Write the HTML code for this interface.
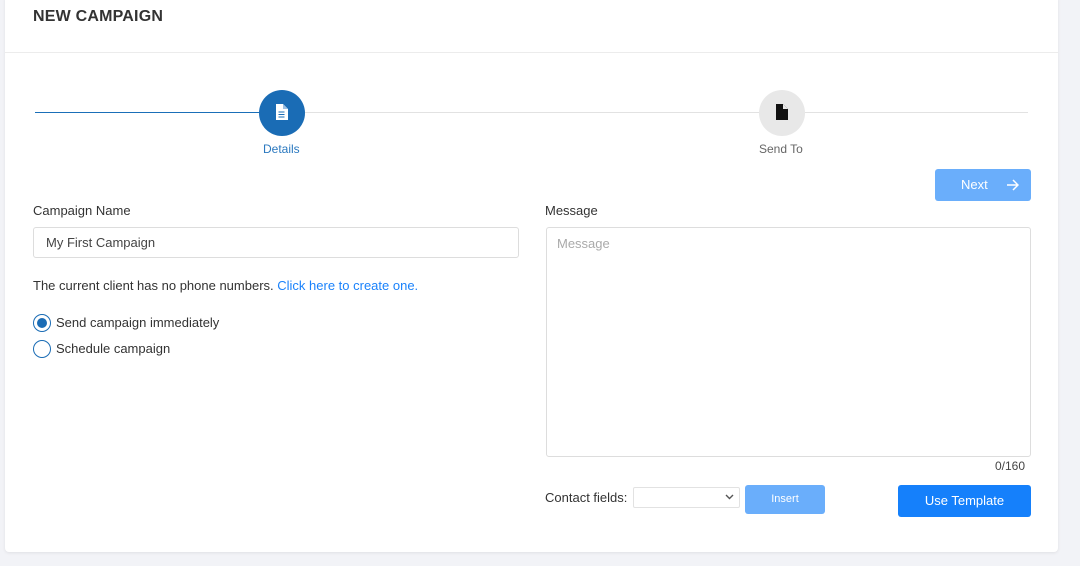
<!DOCTYPE html>
<html><head><style>
*{box-sizing:border-box;margin:0;padding:0}
body{width:1080px;height:566px;background:#f2f3f7;font-family:"Liberation Sans",sans-serif;position:relative;overflow:hidden;color:#333}
.card{position:absolute;left:5px;top:-4px;width:1053px;height:556px;background:#fff;border-radius:4px;box-shadow:0 1px 3px rgba(0,0,0,.08)}
.a{position:absolute}
h1{position:absolute;left:28px;top:12px;font-size:16px;font-weight:bold;color:#333;letter-spacing:.2px}
.hr{position:absolute;left:0;right:0;top:56px;height:1px;background:#ececec}
.circ{position:absolute;width:46px;height:46px;border-radius:50%}
input,.ta{border:1px solid #ddd;border-radius:3px;font-size:13px}
</style></head><body>
<div class="card">
<h1>NEW CAMPAIGN</h1>
<div class="hr"></div>
<div class="a" style="left:30px;top:116px;width:248px;height:1px;background:#1a6fb8"></div>
<div class="a" style="left:278px;top:116px;width:745px;height:1px;background:#e2e2e2"></div>
<div class="circ" style="left:254px;top:94px;background:#1a6cb5"></div>
<svg class="a" style="left:270px;top:108px" width="13" height="16" viewBox="0 0 13 16"><path d="M1 0h7l5 5v11H1z" fill="#fff"/><path d="M8 0v5h5" fill="#9bbfe2"/><path d="M3.5 8h6M3.5 10.5h6M3.5 13h6" stroke="#1a6cb5" stroke-width="1"/></svg>
<div class="circ" style="left:754px;top:94px;background:#e8e8e8"></div>
<svg class="a" style="left:770px;top:108px" width="13" height="16" viewBox="0 0 13 16"><path d="M1 0h7l5 5v11H1z" fill="#111"/><path d="M8 0v5h5z" fill="#e8e8e8"/></svg>
<div class="a" style="left:258px;top:146px;font-size:12px;color:#2a78bf">Details</div>
<div class="a" style="left:754px;top:146px;font-size:12px;color:#666">Send To</div>
<div class="a" style="left:930px;top:173px;width:96px;height:32px;background:#6aaefb;border-radius:3px;color:#fff;font-size:13px;line-height:32px;padding-left:26px">Next<svg style="position:absolute;left:71px;top:10px" width="13" height="12" viewBox="0 0 13 12"><path d="M1 6h11M7 1l5 5-5 5" stroke="#fff" stroke-width="1.5" fill="none"/></svg></div>
<div class="a" style="left:28px;top:207px;font-size:13px">Campaign Name</div>
<div class="a" style="left:540px;top:207px;font-size:13px">Message</div>
<div class="a" style="left:28px;top:231px;width:486px;height:31px;border:1px solid #ddd;border-radius:3px;font-size:13px;line-height:29px;padding-left:12px;color:#444">My First Campaign</div>
<div class="a ta" style="left:541px;top:231px;width:485px;height:230px;padding:8px 10px;color:#aaa">Message</div>
<div class="a" style="left:28px;top:282px;font-size:13px">The current client has no phone numbers. <span style="color:#1a82fb">Click here to create one.</span></div>
<div class="a" style="left:28px;top:318px;width:18px;height:18px;border:1px solid #1a6cb5;border-radius:50%"><div style="margin:3px;width:10px;height:10px;border-radius:50%;background:#1a6cb5"></div></div>
<div class="a" style="left:51px;top:319px;font-size:13px">Send campaign immediately</div>
<div class="a" style="left:28px;top:344px;width:18px;height:18px;border:1px solid #1a6cb5;border-radius:50%"></div>
<div class="a" style="left:51px;top:345px;font-size:13px">Schedule campaign</div>
<div class="a" style="left:990px;top:463px;font-size:12px;color:#444">0/160</div>
<div class="a" style="left:540px;top:494px;font-size:13px">Contact fields:</div>
<div class="a" style="left:628px;top:491px;width:107px;height:21px;border:1px solid #e2e2e2;border-radius:2px"><svg style="position:absolute;right:5px;top:6px" width="9" height="6" viewBox="0 0 9 6"><path d="M1 1l3.5 3.5L8 1" stroke="#555" stroke-width="1.4" fill="none"/></svg></div>
<div class="a" style="left:740px;top:489px;width:80px;height:29px;background:#6aaefb;border-radius:3px;color:#fff;font-size:11px;line-height:29px;text-align:center">Insert</div>
<div class="a" style="left:893px;top:489px;width:133px;height:32px;background:#1580fb;border-radius:3px;color:#fff;font-size:13px;line-height:32px;text-align:center">Use Template</div>
</div>
</body></html>
